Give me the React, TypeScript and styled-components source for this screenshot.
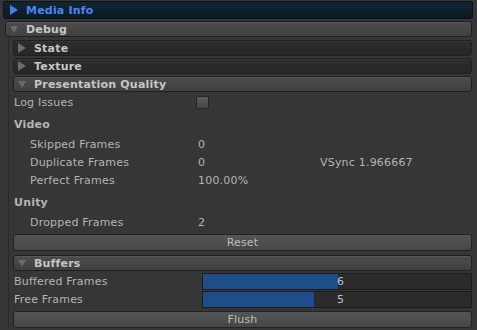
import styled, { createGlobalStyle } from "styled-components";

const GlobalStyle = createGlobalStyle`
  html, body {
    margin: 0;
    padding: 0;
    background: #363636;
  }
  body {
    font-family: "DejaVu Sans", "Liberation Sans", sans-serif;
    font-size: 11px;
    letter-spacing: 0.2px;
    color: #b4b4b4;
  }
`;

const Page = styled.div`
  width: 477px;
  height: 330px;
  box-sizing: border-box;
  padding: 1px 3px 0 3px;
  display: flex;
  flex-direction: column;
  overflow: hidden;
`;

const MediaBar = styled.div`
  height: 18px;
  box-sizing: border-box;
  margin-right: 1px;
  display: flex;
  align-items: center;
  gap: 8px;
  padding-left: 6px;
  background: linear-gradient(#112633, #0b1a22);
  border: 1px solid #0c1216;
  border-radius: 2px;
  color: #4a86f0;
  font-weight: bold;
  font-size: 11px;
`;

const Section = styled.div`
  margin-top: 2px;
  margin-left: 2px;
  display: flex;
  flex-direction: column;
`;

const Header = styled.div<{ $dark?: boolean }>`
  height: 16px;
  box-sizing: border-box;
  display: flex;
  align-items: center;
  gap: 8px;
  padding-left: 4px;
  margin-right: 2px;
  border-radius: 3px;
  border: 1px solid #1f1f1f;
  background: ${(p) =>
    p.$dark
      ? "linear-gradient(#2d2d2d, #262626)"
      : "linear-gradient(#4c4c4c, #404040)"};
  box-shadow: inset 0 1px 0 ${(p) => (p.$dark ? "#363636" : "#585858")};
  color: #c6c6c6;
  font-weight: bold;
  font-size: 11px;
`;

const Arrow = styled.span<{ $open?: boolean; $color?: string }>`
  width: 0;
  height: 0;
  border-style: solid;
  ${(p) =>
    p.$open
      ? `border-width: 7px 4px 0 4px; border-color: ${p.$color || "#6b6b6b"} transparent transparent transparent;`
      : `border-width: 5px 0 5px 8px; border-color: transparent transparent transparent ${p.$color || "#6b6b6b"};`}
`;

const Body = styled.div`
  margin-left: 3px;
  padding-left: 4px;
  border-left: 1px solid #2a2a2a;
  display: flex;
  flex-direction: column;
`;

const Gap = styled.div<{ $h: number }>`
  height: ${(p) => p.$h}px;
  flex-shrink: 0;
`;

const Row = styled.div<{ $indent?: boolean }>`
  height: 18px;
  display: grid;
  grid-template-columns: ${(p) => (p.$indent ? "168px" : "184px")} 122px 1fr;
  align-items: center;
  padding-left: ${(p) => (p.$indent ? 17 : 1)}px;
  white-space: nowrap;
`;

const Group = styled.div`
  height: 24px;
  box-sizing: border-box;
  padding-top: 2px;
  display: flex;
  align-items: center;
  padding-left: 1px;
  font-weight: bold;
`;

const Check = styled.div`
  width: 11px;
  height: 11px;
  margin-left: -2px;
  border-radius: 2px;
  border: 1px solid #262626;
  background: linear-gradient(#5a5a5a, #474747);
`;

const Button = styled.div`
  height: 17px;
  box-sizing: border-box;
  margin-right: 2px;
  display: flex;
  align-items: center;
  justify-content: center;
  border-radius: 3px;
  border: 1px solid #232323;
  background: linear-gradient(#555555, #464646);
  color: #bdbdbd;
`;

const BarRow = styled.div`
  height: 18px;
  display: grid;
  grid-template-columns: 188px 1fr;
  align-items: center;
  padding-left: 1px;
`;

const Track = styled.div`
  position: relative;
  height: 17px;
  box-sizing: border-box;
  border: 1px solid #1c1c1c;
  background: #2b2b2b;
  margin-right: 2px;
`;

const Fill = styled.div`
  height: 100%;
  background: #1f4c8a;
`;

const TrackLabel = styled.span`
  position: absolute;
  left: 134px;
  top: 0;
  height: 15px;
  line-height: 15px;
  color: #c0c0c0;
`;

const bars = [
  { label: "Buffered Frames", value: 6, fill: 135 },
  { label: "Free Frames", value: 5, fill: 111 },
];

export default function App() {
  return (
    <>
      <GlobalStyle />
      <Page>
        <MediaBar>
          <Arrow $color="#3f7fe8" />
          Media Info
        </MediaBar>
        <Section>
          <Header>
            <Arrow $open />
            Debug
          </Header>
          <Body>
            <Gap $h={3} />
            <Header $dark>
              <Arrow />
              State
            </Header>
            <Gap $h={2} />
            <Header $dark>
              <Arrow />
              Texture
            </Header>
            <Gap $h={2} />
            <Header>
              <Arrow $open />
              Presentation Quality
            </Header>
            <Gap $h={1} />
            <Row>
              <span>Log Issues</span>
              <Check />
            </Row>
            <Group>Video</Group>
            <Row $indent>
              <span>Skipped Frames</span>
              <span>0</span>
            </Row>
            <Row $indent>
              <span>Duplicate Frames</span>
              <span>0</span>
              <span>VSync 1.966667</span>
            </Row>
            <Row $indent>
              <span>Perfect Frames</span>
              <span>100.00%</span>
            </Row>
            <Group>Unity</Group>
            <Row $indent>
              <span>Dropped Frames</span>
              <span>2</span>
            </Row>
            <Gap $h={3} />
            <Button>Reset</Button>
            <Gap $h={4} />
            <Header>
              <Arrow $open />
              Buffers
            </Header>
            <Gap $h={1} />
            {bars.map((b) => (
              <BarRow key={b.label}>
                <span>{b.label}</span>
                <Track>
                  <Fill style={{ width: b.fill }} />
                  <TrackLabel>{b.value}</TrackLabel>
                </Track>
              </BarRow>
            ))}
            <Gap $h={3} />
            <Button>Flush</Button>
          </Body>
        </Section>
      </Page>
    </>
  );
}
